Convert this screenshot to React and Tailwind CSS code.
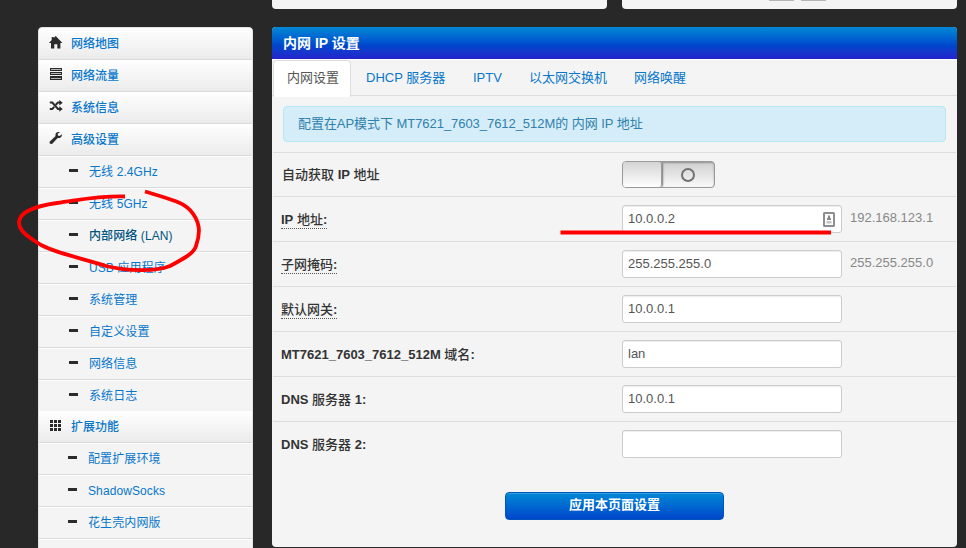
const FONT = "font-['Liberation_Sans','Noto_Sans_CJK_SC',sans-serif]";

const HomeIcon = () => (
  <svg className="size-3.5 block" viewBox="0 0 14 14" fill="#2b2b2b">
    <path d="M6.7 0L13.2 6.7V7H11.4V12.4H8.3V8.2H5.3V12.4H2V7H.1V6.700L2.700 4V1H4.700V2.100Z" />
  </svg>
);
const TasksIcon = () => (
  <svg className="size-3.5 block" viewBox="0 0 14 14" fill="#2b2b2b" shapeRendering="crispEdges">
    <path d="M1 0H13V12H1Z" />
    <path d="M2 1H12V2H2ZM2 5H12V6H2ZM2 9.500H12V10.500H2Z" fill="#b5b5b5" />
    <path d="M1 3H13V4H1ZM1 7H13V8H1Z" fill="#f0f0f0" />
  </svg>
);
const ShuffleIcon = () => (
  <svg className="size-3.5 block" viewBox="0 0 14 14" fill="none" stroke="#2b2b2b" strokeWidth="2">
    <path d="M.8 2.500H3.300L9 9H11M.8 9H3.300L5.200 6.900M6.800 4.700L9 2.500H11" />
    <path d="M10.300 0L13.700 2.700L10.300 5.500ZM10.300 6.200L13.700 9L10.300 11.800Z" fill="#2b2b2b" stroke="none" />
  </svg>
);
const WrenchIcon = () => (
  <svg className="size-3.5 block" viewBox="0 0 14 14" fill="#2b2b2b">
    <path d="M12.8 2.2L10.6 3.9L8.9 3.4L8.7 1.7L11 .2C9.400 -.4 7.200 .1 6.600 2C6.300 2.800 6.400 3.400 6.600 4L1.100 9.200C.3 10 .4 11 1.100 11.600C1.800 12.300 2.800 12.100 3.500 11.400L8.700 5.900C11 6.500 13.300 4.700 12.800 2.200Z" />
  </svg>
);
const GridIcon = () => (
  <svg className="size-3.5 block" viewBox="0 0 14 14" fill="#2b2b2b" shapeRendering="crispEdges">
    <path d="M1 1h3v3H1zM5 1h3v3H5zM9 1h3v3H9zM1 5h3v3H1zM5 5h3v3H5zM9 5h3v3H9zM1 9h3v3H1zM5 9h3v3H5zM9 9h3v3H9z" />
  </svg>
);

// Chinese glyphs take the medium weight, Latin words and digits the bold one.
function Strong({ text }) {
  return (
    <span className="font-medium whitespace-pre">
      {text.split(/([\x21-\x7e]+)/).map((part, i) =>
        i % 2 ? <b key={i} className="font-bold">{part}</b> : part
      )}
    </span>
  );
}

function Group({ icon: Icon, label }) {
  return (
    <a className="h-8 flex items-center gap-2 pl-2.5 border-b border-[#dadada] bg-linear-to-b from-white to-[#ebebeb] font-medium text-[#0877cc]">
      <span className="-mt-0.5"><Icon /></span>
      <span className="pt-px">{label}</span>
    </a>
  );
}

function Item({ label, active, last, ext }) {
  return (
    <a className={`${last ? "h-[31px]" : "h-8 border-b border-[#dadada]"} ${ext ? "pl-[29px]" : "pl-[30px]"} flex items-center gap-[11px] shadow-[inset_0_1px_0_white] tracking-[0.1px] ${active ? "font-medium text-[#005580]" : "text-[#0877cc]"}`}>
      <span className="w-[9px] h-[3px] -mt-[3px] bg-[#2b2b2b]" />
      <span>{label}</span>
    </a>
  );
}

function Row({ label, value, hint, dotted, last, card }) {
  return (
    <div className={`h-[45px] flex items-start pt-2 pl-2 ${last ? "" : "border-b border-[#dddddd]"}`}>
      <div className="w-[341px] pt-[5px] leading-[20px] text-[#333333]">
        <span className={dotted ? "inline-block h-[19px] leading-[19px] border-b border-dotted border-[#555]" : ""}><Strong text={label} /></span>
      </div>
      <div className="w-[220px] h-7 flex items-center justify-between bg-white border border-[#cccccc] rounded-[3px] shadow-[inset_0_1px_1px_rgba(0,0,0,0.075)] pl-[5px] pr-1.5 text-[#555555]">
        <span className="-mt-px">{value}</span>
        {card && (
          <svg className="w-3 h-[15px]" viewBox="0 0 12 15">
            <rect x="1" y="1" width="10" height="13" rx="0.5" fill="white" stroke="#8e8e8e" strokeWidth="2" />
            <path d="M5 3.500h2v2l1 1v1.500H4V6.500l1-1z" fill="#888" />
            <path d="M3.500 9h5v2.500h-5z" fill="#c4c4c4" />
          </svg>
        )}
      </div>
      {hint && <span className="ml-2 pt-[3px] leading-[20px] text-[#888888]">{hint}</span>}
    </div>
  );
}

export default function App() {
  return (
    <div className={`relative w-[966px] h-[548px] overflow-hidden bg-[#282828] text-[13px] ${FONT}`}>
      <div className="flex items-start h-[548px]">
        <nav className="ml-[38px] mt-[27px] w-[215px] h-[540px] border border-[#e3e3e3] rounded bg-[#f4f4f4] overflow-hidden text-[12px]">
          <Group icon={HomeIcon} label="网络地图" />
          <Group icon={TasksIcon} label="网络流量" />
          <Group icon={ShuffleIcon} label="系统信息" />
          <Group icon={WrenchIcon} label="高级设置" />
          <Item label="无线 2.4GHz" />
          <Item label="无线 5GHz" />
          <Item label="内部网络 (LAN)" active />
          <Item label="USB 应用程序" />
          <Item label="系统管理" />
          <Item label="自定义设置" />
          <Item label="网络信息" />
          <Item label="系统日志" last />
          <Group icon={GridIcon} label="扩展功能" />
          <Item label="配置扩展环境" ext />
          <Item label="ShadowSocks" ext />
          <Item label="花生壳内网版" ext />
          <div className="h-8 shadow-[inset_0_1px_0_white]" />
        </nav>
        <main className="ml-[19px] w-[685px]">
          <div className="flex justify-between mb-[18px]">
            <div className="w-[335px] h-[9px] bg-[#f4f4f4] rounded-b-[4px]" />
            <div className="w-[335px] h-[9px] bg-[#f4f4f4] rounded-b-[4px] flex gap-[7px] pl-[147px]">
              <div className="w-[25px] h-px bg-[#b5b5b5]" />
              <div className="w-[25px] h-px bg-[#b5b5b5]" />
            </div>
          </div>
          <section className="h-[520px] bg-[#f4f4f4] rounded overflow-hidden">
            <h2 className="h-8 flex items-center pl-[11px] text-[14px] font-bold text-white bg-linear-to-b from-[#0088d5] via-[#0044cc] via-60% to-[#2222cc]">内网 IP 设置</h2>
            <div className="h-[37px] border-t border-t-white border-b border-b-[#dddddd] flex leading-[35px] text-[#0877cc] px-px">
              <div className="w-[78px] h-[37px] pl-[13px] bg-white border border-[#dddddd] border-b-0 rounded-t text-[#555555] leading-[33px]">内网设置</div>
              <div className="pl-[15px] w-[107px]">DHCP 服务器</div>
              <div className="pl-[15px] w-[56px]">IPTV</div>
              <div className="pl-[15px] w-[105px]">以太网交换机</div>
              <div className="pl-[15px]">网络唤醒</div>
            </div>
            <div className="mx-[11px] mt-[10px] mb-[10px] h-9 flex items-center pl-[14px] bg-[#d4edf8] border border-[#b5e8f1] rounded text-[#3081ad] tracking-[-0.05px]">配置在AP模式下 MT7621_7603_7612_512M的 内网 IP 地址</div>
            <div className="mx-px border-t border-[#dddddd]">
              <div className="h-11 border-b border-[#dddddd] flex items-start pt-2 pl-[9px]">
                <div className="w-[340px] pt-1 leading-[20px] text-[#333333]"><Strong text="自动获取 IP 地址" /></div>
                <div className="w-[93px] h-[27px] flex border border-[#999] rounded bg-linear-to-b from-[#cfcfcf] to-[#fafafa] overflow-hidden">
                  <div className="w-[39px] h-full bg-linear-to-b from-[#d4d4d4] to-white border-r border-[#999] rounded-r-[3px] shadow-[1px_0_2px_#888]" />
                  <div className="flex-1 flex items-center justify-center shadow-[inset_0_1px_2px_rgba(0,0,0,0.3)]">
                    <div className="size-3.5 rounded-full border-2 border-[#737373]" />
                  </div>
                </div>
              </div>
              <Row label="IP 地址:" value="10.0.0.2" hint="192.168.123.1" dotted card />
              <Row label="子网掩码:" value="255.255.255.0" hint="255.255.255.0" dotted />
              <Row label="默认网关:" value="10.0.0.1" dotted />
              <Row label="MT7621_7603_7612_512M 域名:" value="lan" />
              <Row label="DNS 服务器 1:" value="10.0.0.1" />
              <Row label="DNS 服务器 2:" value="" last />
            </div>
            <button className="block mx-auto mt-[25px] w-[219px] h-7 pb-0.5 rounded border border-[#0055bb] bg-linear-to-b from-[#0088d5] to-[#0044cc] shadow-[inset_0_1px_0_rgba(255,255,255,0.2)] font-bold text-white leading-[24px]">应用本页面设置</button>
          </section>
        </main>
      </div>
      <svg className="absolute left-0 top-0 pointer-events-none" width="966" height="548" fill="none" stroke="#ff0000" strokeWidth="3.8" strokeLinejoin="round">
        <path d="M125 196.500C95 196 80 200 57 203C35 206 20 212 19 222C19 232 30 238 41 245C58 254 85 259 106 266C130 272 158 271 170 266C185 258 194 253 196 246C201 232 200 221 190 210C182 202 170 199 145 191.500" />
        <path d="M560.500 232.500H831" />
      </svg>
    </div>
  );
}
